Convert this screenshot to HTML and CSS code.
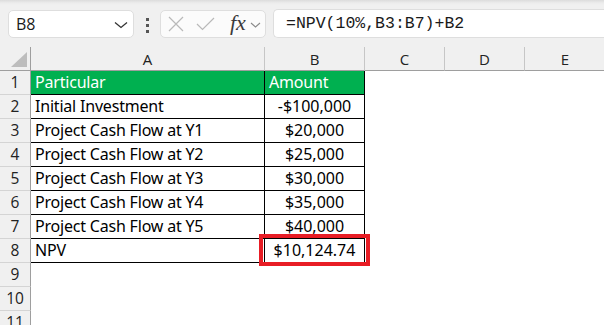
FILE: index.html
```html
<!DOCTYPE html>
<html>
<head>
<meta charset="utf-8">
<link rel="stylesheet" href="styles.css">
</head>
<body>
<div class="toolbar">
  <div class="namebox">
    <span class="name">B8</span>
    <svg class="chev" width="14" height="8" viewBox="0 0 14 8"><path d="M1 1.5 L7 6.5 L13 1.5" fill="none" stroke="#333" stroke-width="1.3"/></svg>
  </div>
  <div class="dots"><i></i><i></i><i></i></div>
  <div class="fxbox">
    <svg class="ico" width="16" height="16" viewBox="0 0 16 16"><path d="M1 1 L15 15 M15 1 L1 15" fill="none" stroke="#b9b9b9" stroke-width="1.2"/></svg>
    <svg class="ico chk" width="19" height="14" viewBox="0 0 19 14"><path d="M1 7 L6.5 12.5 L18 1" fill="none" stroke="#b9b9b9" stroke-width="1.2"/></svg>
    <span class="fx">fx</span>
    <svg class="chev2" width="11" height="6" viewBox="0 0 11 6"><path d="M1 1 L5.5 5 L10 1" fill="none" stroke="#8a8a8a" stroke-width="1.1"/></svg>
  </div>
  <div class="formula">=NPV(10%,B3:B7)+B2</div>
</div>
<div class="sheet">
  <div class="corner"><svg width="16" height="15" viewBox="0 0 16 15"><path d="M16 0 L16 15 L0 15 Z" fill="#bdbdbd"/></svg></div>
  <div class="ch">A</div><div class="ch">B</div><div class="ch">C</div><div class="ch">D</div><div class="ch last">E</div>

  <div class="rh">1</div><div class="c tb hd">Particular</div><div class="c tb hd">Amount</div><div class="c"></div><div class="c"></div><div class="c"></div>
  <div class="rh">2</div><div class="c tb">Initial Investment</div><div class="c tb num">-$100,000</div><div class="c"></div><div class="c"></div><div class="c"></div>
  <div class="rh">3</div><div class="c tb">Project Cash Flow at Y1</div><div class="c tb num">$20,000</div><div class="c"></div><div class="c"></div><div class="c"></div>
  <div class="rh">4</div><div class="c tb">Project Cash Flow at Y2</div><div class="c tb num">$25,000</div><div class="c"></div><div class="c"></div><div class="c"></div>
  <div class="rh">5</div><div class="c tb">Project Cash Flow at Y3</div><div class="c tb num">$30,000</div><div class="c"></div><div class="c"></div><div class="c"></div>
  <div class="rh">6</div><div class="c tb">Project Cash Flow at Y4</div><div class="c tb num">$35,000</div><div class="c"></div><div class="c"></div><div class="c"></div>
  <div class="rh">7</div><div class="c tb">Project Cash Flow at Y5</div><div class="c tb num">$40,000</div><div class="c"></div><div class="c"></div><div class="c"></div>
  <div class="rh">8</div><div class="c tb">NPV</div><div class="c tb num mark">$10,124.74</div><div class="c"></div><div class="c"></div><div class="c"></div>
  <div class="rh">9</div><div class="c"></div><div class="c"></div><div class="c"></div><div class="c"></div><div class="c"></div>
  <div class="rh">10</div><div class="c"></div><div class="c"></div><div class="c"></div><div class="c"></div><div class="c"></div>
  <div class="rh">11</div><div class="c"></div><div class="c"></div><div class="c"></div><div class="c"></div><div class="c"></div>
</div>
</body>
</html>
```
FILE: styles.css
```css
html, body { margin: 0; padding: 0; }
body {
  width: 604px;
  height: 325px;
  overflow: hidden;
  background: #fff;
  font-family: "Noto Sans", "Liberation Sans", sans-serif;
  color: #000;
}
.toolbar {
  height: 47px;
  box-sizing: border-box;
  background: linear-gradient(#dcdcdc 0, #ececec 3px, #f0f0f0 5px, #f0f0f0 100%);
  display: flex;
  align-items: flex-start;
  padding-top: 10px;
  padding-left: 8px;
}
.namebox {
  width: 126px;
  height: 28px;
  box-sizing: border-box;
  background: #fff;
  border: 1px solid #dedede;
  border-radius: 5px;
  display: flex;
  align-items: center;
  justify-content: space-between;
  padding: 0 5px 0 7px;
}
.name { font-family: "Open Sans", sans-serif; font-size: 16px; color: #1a1a1a; }
.chev { margin-top: 2px; }
.dots {
  width: 26px;
  display: flex;
  flex-direction: column;
  align-items: center;
  gap: 3px;
  padding-top: 8px;
}
.dots i { display: block; width: 3px; height: 3px; background: #555; }
.fxbox {
  width: 106px;
  height: 28px;
  box-sizing: border-box;
  background: #fbfbfb;
  border: 1px solid #dedede;
  border-radius: 5px;
  display: flex;
  align-items: center;
  padding-left: 7px;
}
.ico { display: block; }
.chk { margin-left: 12px; }
.fx {
  font-family: "Liberation Serif", serif;
  font-style: italic;
  font-size: 22px;
  color: #3a3a3a;
  margin-left: 15px;
  line-height: 1;
  margin-top: -2px;
}
.chev2 { margin-left: 4px; margin-top: 2px; }
.formula {
  margin-left: 7px;
  flex: 1;
  height: 29px;
  margin-top: -1px;
  box-sizing: border-box;
  background: #fff;
  border: 1px solid #dedede;
  border-right: none;
  border-radius: 5px 0 0 5px;
  font-family: "Liberation Mono", monospace;
  font-size: 16.5px;
  line-height: 27px;
  padding-left: 12px;
  color: #1a1a1a;
}
.sheet {
  display: grid;
  grid-template-columns: 31px 234px 100px 80px 80px 80px;
  grid-template-rows: 24px repeat(11, 24px);
  font-size: 16px;
}
.corner {
  background: #f0f0f0;
  border-right: 1px solid #9e9e9e;
  border-bottom: 1px solid #9e9e9e;
  display: flex;
  align-items: flex-end;
  justify-content: flex-end;
  padding: 0 3px 3px 0;
  box-sizing: border-box;
}
.ch {
  background: #f0f0f0;
  border-right: 1px solid #c6c6c6;
  border-bottom: 1px solid #9e9e9e;
  text-align: center;
  line-height: 24px;
  font-family: "Open Sans", sans-serif;
  font-size: 15px;
  color: #222;
}
.ch.last { border-right: none; }
.rh {
  background: #f0f0f0;
  border-right: 1px solid #9e9e9e;
  border-bottom: 1px solid #d4d4d4;
  text-align: center;
  line-height: 23px;
  font-family: "Open Sans", sans-serif;
  font-size: 15.5px;
  color: #222;
}
.c {
  line-height: 23px;
  padding-left: 4px;
  white-space: nowrap;
  letter-spacing: -0.2px;
}
.tb {
  border-right: 1px solid #000;
  border-bottom: 1px solid #000;
}
.hd { background: #00b050; color: #fff; }
.num { text-align: center; padding-left: 0; letter-spacing: 0; }
.mark { position: relative; }
.mark::after {
  content: "";
  position: absolute;
  left: -6px;
  top: -5px;
  right: -6px;
  bottom: -4px;
  border: 4px solid #e81d25;
}
```
